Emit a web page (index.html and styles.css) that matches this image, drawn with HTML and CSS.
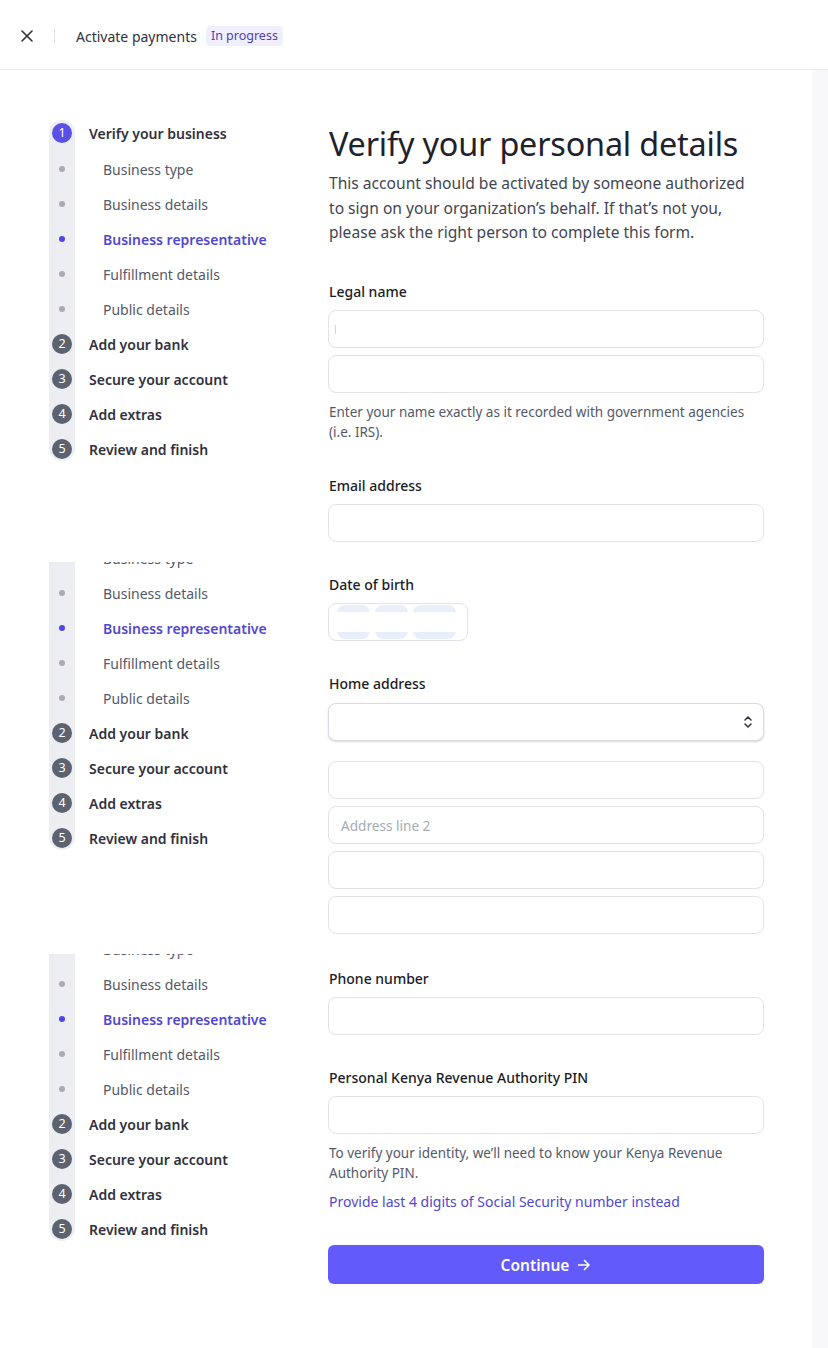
FILE: index.html
```html
<!DOCTYPE html>
<html lang="en">
<head>
<meta charset="utf-8">
<title>Activate payments</title>
<link rel="stylesheet" href="styles.css">
</head>
<body>
<header class="topbar">
  <button class="close" aria-label="Close">
    <svg width="12" height="12" viewBox="0 0 12 12"><path d="M1 1 L11 11 M11 1 L1 11" stroke="#30313d" stroke-width="1.6" stroke-linecap="round"/></svg>
  </button>
  <span class="divider"></span>
  <span class="topbar-title">Activate payments</span>
  <span class="badge">In progress</span>
</header>

<div class="page">
  <aside class="sidebar">
    <div class="nav-frame">
      <ol class="steps">
        <li class="row step current"><span class="rail rail-top"><span class="num">1</span></span><span class="step-label">Verify your business</span></li>
        <li class="row sub"><span class="rail"><span class="dot"></span></span><span class="sub-label">Business type</span></li>
        <li class="row sub"><span class="rail"><span class="dot"></span></span><span class="sub-label">Business details</span></li>
        <li class="row sub active"><span class="rail"><span class="dot"></span></span><span class="sub-label">Business representative</span></li>
        <li class="row sub"><span class="rail"><span class="dot"></span></span><span class="sub-label">Fulfillment details</span></li>
        <li class="row sub"><span class="rail"><span class="dot"></span></span><span class="sub-label">Public details</span></li>
        <li class="row step"><span class="rail"><span class="num">2</span></span><span class="step-label">Add your bank</span></li>
        <li class="row step"><span class="rail"><span class="num">3</span></span><span class="step-label">Secure your account</span></li>
        <li class="row step"><span class="rail"><span class="num">4</span></span><span class="step-label">Add extras</span></li>
        <li class="row step"><span class="rail rail-bottom"><span class="num">5</span></span><span class="step-label">Review and finish</span></li>
      </ol>
    </div>

    <div class="nav-frame clip clip-2">
      <ol class="steps">
        <li class="row step current"><span class="rail rail-top"><span class="num">1</span></span><span class="step-label">Verify your business</span></li>
        <li class="row sub"><span class="rail"><span class="dot"></span></span><span class="sub-label">Business type</span></li>
        <li class="row sub"><span class="rail"><span class="dot"></span></span><span class="sub-label">Business details</span></li>
        <li class="row sub active"><span class="rail"><span class="dot"></span></span><span class="sub-label">Business representative</span></li>
        <li class="row sub"><span class="rail"><span class="dot"></span></span><span class="sub-label">Fulfillment details</span></li>
        <li class="row sub"><span class="rail"><span class="dot"></span></span><span class="sub-label">Public details</span></li>
        <li class="row step"><span class="rail"><span class="num">2</span></span><span class="step-label">Add your bank</span></li>
        <li class="row step"><span class="rail"><span class="num">3</span></span><span class="step-label">Secure your account</span></li>
        <li class="row step"><span class="rail"><span class="num">4</span></span><span class="step-label">Add extras</span></li>
        <li class="row step"><span class="rail rail-bottom"><span class="num">5</span></span><span class="step-label">Review and finish</span></li>
      </ol>
    </div>

    <div class="nav-frame clip clip-3">
      <ol class="steps">
        <li class="row step current"><span class="rail rail-top"><span class="num">1</span></span><span class="step-label">Verify your business</span></li>
        <li class="row sub"><span class="rail"><span class="dot"></span></span><span class="sub-label">Business type</span></li>
        <li class="row sub"><span class="rail"><span class="dot"></span></span><span class="sub-label">Business details</span></li>
        <li class="row sub active"><span class="rail"><span class="dot"></span></span><span class="sub-label">Business representative</span></li>
        <li class="row sub"><span class="rail"><span class="dot"></span></span><span class="sub-label">Fulfillment details</span></li>
        <li class="row sub"><span class="rail"><span class="dot"></span></span><span class="sub-label">Public details</span></li>
        <li class="row step"><span class="rail"><span class="num">2</span></span><span class="step-label">Add your bank</span></li>
        <li class="row step"><span class="rail"><span class="num">3</span></span><span class="step-label">Secure your account</span></li>
        <li class="row step"><span class="rail"><span class="num">4</span></span><span class="step-label">Add extras</span></li>
        <li class="row step"><span class="rail rail-bottom"><span class="num">5</span></span><span class="step-label">Review and finish</span></li>
      </ol>
    </div>
  </aside>

  <main class="form">
    <h1 class="title">Verify your personal details</h1>
    <p class="intro">This account should be activated by someone authorized to sign on your organization’s behalf. If that’s not you, please ask the right person to complete this form.</p>

    <section class="field field-first">
      <div class="label">Legal name</div>
      <div class="stack">
        <div class="input"><span class="caret"></span></div>
        <div class="input"></div>
      </div>
      <p class="help">Enter your name exactly as it recorded with government agencies (i.e. IRS).</p>
    </section>

    <section class="field field-email">
      <div class="label">Email address</div>
      <div class="input"></div>
    </section>

    <section class="field">
      <div class="label">Date of birth</div>
      <div class="input dob">
        <span class="seg seg-s"></span><span class="seg seg-s"></span><span class="seg seg-l"></span>
      </div>
    </section>

    <section class="field">
      <div class="label label-select">Home address</div>
      <div class="input select">
        <svg width="10" height="14" viewBox="0 0 10 14"><path d="M2 5 L5 2 L8 5 M2 9 L5 12 L8 9" fill="none" stroke="#30313d" stroke-width="1.5" stroke-linecap="round" stroke-linejoin="round"/></svg>
      </div>
      <div class="stack address">
        <div class="input"></div>
        <div class="input"><span class="placeholder">Address line 2</span></div>
        <div class="input"></div>
        <div class="input"></div>
      </div>
    </section>

    <section class="field field-phone">
      <div class="label">Phone number</div>
      <div class="input"></div>
    </section>

    <section class="field">
      <div class="label">Personal Kenya Revenue Authority PIN</div>
      <div class="input"></div>
      <p class="help">To verify your identity, we’ll need to know your Kenya Revenue Authority PIN.</p>
      <a class="alt-link" href="#">Provide last 4 digits of Social Security number instead</a>
    </section>

    <button class="continue">Continue
      <svg width="14" height="14" viewBox="0 0 14 14"><path d="M1.5 7 H12 M7.5 2.5 L12 7 L7.5 11.5" fill="none" stroke="#fff" stroke-width="1.6" stroke-linecap="round" stroke-linejoin="round"/></svg>
    </button>
  </main>

  <div class="gutter"></div>
</div>
</body>
</html>
```

FILE: styles.css
```css
* { box-sizing: border-box; }

body {
  margin: 0;
  background: #fff;
  color: #1a1b25;
  font-family: "Noto Sans", "Open Sans", sans-serif;
}

/* ---------- top bar ---------- */
.topbar {
  height: 70px;
  border-bottom: 1px solid #ebebee;
  display: flex;
  align-items: center;
  padding: 3px 0 0 21px;
}
.close {
  border: 0;
  background: none;
  padding: 0;
  width: 12px;
  height: 12px;
  display: flex;
}
.divider {
  width: 1px;
  height: 16px;
  background: #e3e4e8;
  margin: 0 21px 0 21px;
}
.topbar-title {
  font-size: 14px;
  color: #30313d;
}
.badge {
  margin-left: 9px;
  background: #f1effe;
  color: #4c43b0;
  font-size: 12.5px;
  line-height: 16px;
  padding: 2px 5px;
  border-radius: 4px;
}

/* ---------- page ---------- */
.page {
  display: flex;
  min-height: calc(100vh - 70px);
}

.sidebar {
  width: 328px;
  padding: 45.5px 0 0 49px;
  display: flex;
  flex-direction: column;
}
.nav-frame { width: 260px; }
.nav-frame.clip { overflow: hidden; }
.clip-2 { margin-top: 95.5px; height: 294.5px; }
.clip-2 .steps { margin-top: -57.5px; }
.clip-3 { margin-top: 97.5px; height: 293.5px; }
.clip-3 .steps { margin-top: -58.5px; }

.steps {
  list-style: none;
  margin: 0;
  padding: 0;
}
.row {
  height: 35px;
  display: flex;
  align-items: center;
}
.row.current { height: 36px; }
.rail {
  width: 26px;
  align-self: stretch;
  background: #eceef2;
  display: flex;
  align-items: center;
  justify-content: center;
  flex: none;
}
.rail-top {
  margin-top: 4px;
  padding-bottom: 5px;
  border-radius: 13px 13px 0 0;
}
.rail-bottom {
  margin-bottom: 6px;
  padding-top: 6px;
  border-radius: 0 0 13px 13px;
}
.num {
  width: 20px;
  height: 20px;
  border-radius: 50%;
  background: #5c6270;
  color: #fff;
  font-size: 12.5px;
  line-height: 20px;
  text-align: center;
}
.current .num { background: #5a4fe6; }
.dot {
  width: 6px;
  height: 6px;
  border-radius: 50%;
  background: #a6abb5;
}
.active .dot { background: #5046e5; }

.step-label {
  margin-left: 14px;
  font-size: 14px;
  font-weight: 600;
  color: #30313d;
}
.sub-label {
  margin-left: 28px;
  font-size: 14px;
  color: #545969;
}
.active .sub-label {
  color: #5148d0;
  font-weight: 600;
}

/* ---------- form ---------- */
.form {
  width: 436px;
  padding-top: 53px;
  padding-bottom: 64px;
}
.title {
  margin: 0 0 8px 1px;
  font-size: 32.4px;
  line-height: 40px;
  font-weight: 400;
  color: #1f222c;
  letter-spacing: -0.2px;
}
.intro {
  margin: 0 0 0 1px;
  max-width: 421px;
  font-size: 15.6px;
  line-height: 24.5px;
  color: #414552;
}
.field { margin-top: 33px; }
.field-first { margin-top: 37.5px; }
.field-email { margin-top: 34px; }
.field-phone { margin-top: 35px; }

.label {
  font-size: 14px;
  font-weight: 500;
  line-height: 20px;
  margin: 0 0 8px 1px;
  color: #1a1b25;
}
.label-select { margin-bottom: 9px; }
.input {
  height: 38px;
  border: 1px solid #e0e3e8;
  border-radius: 8px;
  background: #fff;
  display: flex;
  align-items: center;
  padding: 0 12px;
}
.stack {
  display: flex;
  flex-direction: column;
  gap: 7px;
}
.caret {
  width: 1px;
  height: 9px;
  background: #d2d5db;
  margin-left: -6px;
}
.placeholder {
  font-size: 13.6px;
  color: #a3acb9;
}
.help {
  margin: 9px 0 0 1px;
  font-size: 13.5px;
  line-height: 20px;
  color: #545969;
}
.alt-link {
  display: block;
  margin: 9px 0 0 1px;
  font-size: 14px;
  line-height: 20px;
  color: #5148d0;
  text-decoration: none;
}

.dob {
  width: 140px;
  padding: 0 8px;
  gap: 5px;
  align-items: stretch;
}
.seg {
  background: linear-gradient(#e9effa 0 22%, #fff 22% 78%, #e9effa 78%);
  border-radius: 8px;
  margin: 1px 0;
}
.seg-s { width: 33px; }
.seg-l { width: 43px; }

.select {
  justify-content: flex-end;
  border-color: #d8dce2;
  box-shadow: 0 1px 2px rgba(30, 35, 50, 0.18);
  padding-right: 10px;
}
.address { margin-top: 20px; }

.continue {
  margin-top: 33px;
  width: 100%;
  height: 39px;
  border: 0;
  border-radius: 6px;
  background: #625afa;
  color: #fff;
  font-family: inherit;
  font-size: 15.5px;
  font-weight: 600;
  display: flex;
  align-items: center;
  justify-content: center;
  gap: 8px;
}

.gutter {
  margin-left: auto;
  width: 16px;
  background: #f8f8fa;
}
```
